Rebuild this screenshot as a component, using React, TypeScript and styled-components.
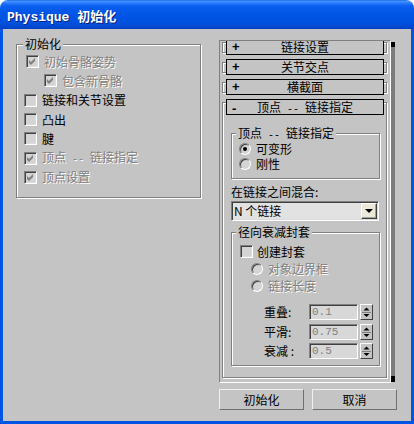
import React from 'react';
import styled, { createGlobalStyle } from 'styled-components';

const FACE = '#c4c4c4';
const CJK = `"Noto Sans CJK SC", "Noto Sans", sans-serif`;

const GlobalStyle = createGlobalStyle`
  html, body { margin: 0; padding: 0; background: #fff; }
  * { box-sizing: border-box; }
`;

const Window = styled.div`
  width: 414px;
  height: 424px;
  display: flex;
  flex-direction: column;
  border-radius: 8px 8px 0 0;
  overflow: hidden;
  font-family: ${CJK};
  font-size: 12px;
  color: #000;
`;

const TitleBar = styled.div`
  height: 29px;
  flex: none;
  display: flex;
  align-items: center;
  padding: 2px 0 0 7px;
  background: linear-gradient(
    180deg,
    #0a5ae8 0px,
    #4a98ff 1px,
    #2a7cff 3px,
    #0a5ff0 6px,
    #0055e5 14px,
    #0052e0 22px,
    #0048d0 27px,
    #003cb8 29px
  );
`;

const Title = styled.span`
  font-family: "Liberation Mono", "Noto Sans CJK SC", monospace;
  font-weight: bold;
  font-size: 13px;
  color: #fff;
  text-shadow: 1px 1px 0 #0a1d7a;
  white-space: pre;
`;

const Body = styled.div`
  flex: 1;
  display: flex;
  align-items: flex-start;
  gap: 18px;
  padding: 9px 0 0 13px;
  background: ${FACE};
  border: 3px solid #0054e3;
  border-top: none;
`;

const Group = styled.fieldset<{ $w: number; $pt: number; $pb: number; $ml?: number; $mt?: number }>`
  margin: ${p => p.$mt ?? 0}px 0 0 ${p => p.$ml ?? 0}px;
  width: ${p => p.$w}px;
  min-width: 0;
  padding: ${p => p.$pt}px 0 ${p => p.$pb}px 0;
  border: 1px solid #808080;
  box-shadow: inset 1px 1px 0 #fff, 1px 1px 0 #fff;
`;

const Legend = styled.legend<{ $ml: number }>`
  margin-left: ${p => p.$ml}px;
  padding: 0 2px;
  height: 12px;
  line-height: 12px;
  background: ${FACE};
  white-space: pre;
`;

const Half = styled.span`
  font-family: "Liberation Mono", monospace;
  font-size: 10px;
  white-space: pre;
`;

const Row = styled.div<{ $h: number; $pl: number; $gap: number; $dim?: boolean }>`
  height: ${p => p.$h}px;
  display: flex;
  align-items: center;
  gap: ${p => p.$gap}px;
  padding-left: ${p => p.$pl}px;
  line-height: 12px;
  white-space: pre;
  color: ${p => (p.$dim ? '#808080' : '#000')};
  text-shadow: ${p => (p.$dim ? '1px 1px 0 #fff' : 'none')};
`;

const Box = styled.span`
  width: 13px;
  height: 13px;
  flex: none;
  display: block;
  border: 1px solid;
  border-color: #808080 #fff #fff #808080;
  box-shadow: inset 1px 1px 0 #404040, inset -1px -1px 0 #dcdcdc;
  background: #d4d4d4;
  svg { display: block; }
`;

const RadioDot = styled.span<{ $on?: boolean }>`
  width: 12px;
  height: 12px;
  flex: none;
  border-radius: 50%;
  border: 1px solid;
  border-color: #808080 #fff #fff #808080;
  box-shadow: inset 1px 1px 0 #404040;
  background: #d4d4d4;
  display: flex;
  align-items: center;
  justify-content: center;
  &::after {
    content: '';
    display: ${p => (p.$on ? 'block' : 'none')};
    width: 4px;
    height: 4px;
    border-radius: 50%;
    background: #000;
  }
`;

const RightCol = styled.div`
  width: 178px;
  margin-top: 2px;
  display: flex;
  flex-direction: column;
`;

const PanelRow = styled.div`
  display: flex;
  height: 343px;
`;

const Scroll = styled.div`
  width: 172px;
  height: 343px;
  overflow: hidden;
  padding-left: 2px;
  border: 1px solid;
  border-color: #808080 #fff #fff #808080;
`;

const ScrollBar = styled.div`
  width: 4px;
  height: 340px;
  margin-top: 2px;
  background: linear-gradient(180deg, #000 0 5px, #7c7c7c 5px calc(100% - 6px), #000 calc(100% - 6px));
`;

const Rollouts = styled.div`
  padding-top: 1px;
`;

const Frame = styled.div<{ $open?: boolean }>`
  width: 165px;
  padding: 0 0 ${p => (p.$open ? 11 : 0)}px 3px;
  margin-bottom: 9px;
  border: 1px solid #808080;
  box-shadow: inset 1px 1px 0 #fff, 1px 1px 0 #fff;
`;

const RollHeader = styled.div<{ $open?: boolean }>`
  width: 158px;
  height: 16px;
  margin: -4px 0 ${p => (p.$open ? 0 : -3)}px;
  border: 1px solid #000;
  background: ${FACE};
  display: grid;
  grid-template-columns: 20px 1fr 20px;
  align-items: center;
  line-height: 14px;
  white-space: pre;
`;

const Sign = styled.span`
  padding-left: 5px;
  font-weight: bold;
  font-family: "Liberation Sans", sans-serif;
  font-size: 13px;
`;

const HeadText = styled.span`
  text-align: center;
`;

const Label = styled.div<{ $mt: number }>`
  margin: ${p => p.$mt}px 0 0 5px;
  height: 12px;
  line-height: 12px;
`;

const Select = styled.div`
  width: 148px;
  height: 20px;
  margin: 3px 0 0 5px;
  display: flex;
  align-items: center;
  padding: 0 1px 0 2px;
  border: 1px solid;
  border-color: #808080 #fff #fff #808080;
  box-shadow: inset 1px 1px 0 #404040, inset -1px -1px 0 #dcdcdc;
  background: #e2e2e2;
`;

const SelectText = styled.span`
  flex: 1;
  line-height: 12px;
  white-space: pre;
`;

const SelectBtn = styled.span`
  width: 16px;
  height: 16px;
  display: flex;
  align-items: center;
  justify-content: center;
  background: #ece9d8;
  border: 1px solid;
  border-color: #fff #404040 #404040 #fff;
  box-shadow: inset -1px -1px 0 #a0a0a0;
  &::after {
    content: '';
    border-left: 4px solid transparent;
    border-right: 4px solid transparent;
    border-top: 4px solid #000;
  }
`;

const SpinList = styled.div`
  margin-top: 10px;
  display: flex;
  flex-direction: column;
  gap: 3.5px;
`;

const SpinRow = styled.div`
  height: 16px;
  display: flex;
  align-items: center;
  padding-left: 32px;
`;

const SpinLabel = styled.span`
  width: 45px;
  line-height: 12px;
  white-space: pre;
`;

const SpinField = styled.span`
  width: 49px;
  height: 16px;
  display: flex;
  align-items: center;
  padding-left: 2px;
  border: 1px solid;
  border-color: #808080 #fff #fff #808080;
  box-shadow: inset 1px 1px 0 #404040;
  background: #d8d8d8;
  color: #808080;
  font-family: "Liberation Mono", monospace;
  font-size: 11px;
`;

const SpinBtn = styled.span`
  width: 13px;
  height: 16px;
  margin-left: 2px;
  border: 1px solid;
  border-color: #fff #404040 #404040 #fff;
  background: ${FACE};
  svg { display: block; }
`;

const Buttons = styled.div`
  display: flex;
  gap: 8px;
  margin-top: 6px;
`;

const Btn = styled.button`
  width: 85px;
  height: 21px;
  padding: 0;
  background: ${FACE};
  border: 1px solid;
  border-color: #f0f0f0 #707070 #707070 #f0f0f0;
  font-family: ${CJK};
  font-size: 12px;
  line-height: 12px;
  color: #000;
`;

const CheckMark = ({ color }: { color: string }) => (
  <svg width="11" height="11" viewBox="0 0 11 11">
    <polygon points="2,4 4,6 8,2 8,5 4,9 2,7" fill={color} />
  </svg>
);

const Check = ({ label, checked, dim, pl, gap = 5, h }: { label: React.ReactNode; checked?: boolean; dim?: boolean; pl: number; gap?: number; h: number }) => (
  <Row $h={h} $pl={pl} $gap={gap} $dim={dim}>
    <Box>{checked && <CheckMark color={dim ? '#808080' : '#000'} />}</Box>
    <span>{label}</span>
  </Row>
);

const Radio = ({ label, on, dim, pl, h }: { label: string; on?: boolean; dim?: boolean; pl: number; h: number }) => (
  <Row $h={h} $pl={pl} $gap={5} $dim={dim}>
    <RadioDot $on={on} />
    <span>{label}</span>
  </Row>
);

const SpinArrows = () => (
  <svg width="11" height="14" viewBox="0 0 11 14">
    <path d="M5.5 2.5 L8.5 5.5 L2.5 5.5 Z" fill="#000" />
    <path d="M1 7.5 H10" stroke="#808080" />
    <path d="M2.5 9 L8.5 9 L5.5 12 Z" fill="#000" />
  </svg>
);

const Spinner = ({ label, value }: { label: React.ReactNode; value: string }) => (
  <SpinRow>
    <SpinLabel>{label}</SpinLabel>
    <SpinField>{value}</SpinField>
    <SpinBtn>
      <SpinArrows />
    </SpinBtn>
  </SpinRow>
);

const Rollout = ({ title, open, children }: { title: React.ReactNode; open?: boolean; children?: React.ReactNode }) => (
  <Frame $open={open}>
    <RollHeader $open={open}>
      <Sign>{open ? '-' : '+'}</Sign>
      <HeadText>{title}</HeadText>
      <span />
    </RollHeader>
    {children}
  </Frame>
);

const LEFT_ROW = 19.3;

export default function App() {
  return (
    <>
      <GlobalStyle />
      <Window>
        <TitleBar>
          <Title>Physique 初始化</Title>
        </TitleBar>
        <Body>
          <Group $w={185} $pt={2} $pb={10}>
            <Legend $ml={6}>初始化</Legend>
            <Check h={LEFT_ROW} pl={9} label="初始骨骼姿势" checked dim />
            <Check h={LEFT_ROW} pl={27} label="包含新骨骼" checked dim />
            <Check h={LEFT_ROW} pl={7} label="链接和关节设置" />
            <Check h={LEFT_ROW} pl={7} label="凸出" />
            <Check h={LEFT_ROW} pl={7} label="腱" />
            <Check h={LEFT_ROW} pl={7} label={<>顶点<Half> -- </Half>链接指定</>} checked dim />
            <Check h={LEFT_ROW} pl={7} label="顶点设置" checked dim />
          </Group>

          <RightCol>
            <PanelRow>
              <Scroll>
                <Rollouts>
                  <Rollout title="链接设置" />
                  <Rollout title="关节交点" />
                  <Rollout title="横截面" />
                  <Rollout open title={<>顶点<Half> -- </Half>链接指定</>}>
                    <Group $w={149} $pt={2} $pb={7} $ml={5} $mt={12}>
                      <Legend $ml={4}>顶点<Half> -- </Half>链接指定</Legend>
                      <Radio h={15} pl={7} label="可变形" on />
                      <Radio h={15} pl={7} label="刚性" />
                    </Group>
                    <Label $mt={7}>在链接之间混合:</Label>
                    <Select>
                      <SelectText>N 个链接</SelectText>
                      <SelectBtn />
                    </Select>
                    <Group $w={149} $pt={5} $pb={6} $ml={5} $mt={5}>
                      <Legend $ml={4}>径向衰减封套</Legend>
                      <Check h={17} pl={8} gap={4} label="创建封套" />
                      <Radio h={17} pl={19} label="对象边界框" dim />
                      <Radio h={17} pl={19} label="链接长度" dim />
                      <SpinList>
                        <Spinner label="重叠:" value="0.1" />
                        <Spinner label="平滑:" value="0.75" />
                        <Spinner label="衰减 :" value="0.5" />
                      </SpinList>
                    </Group>
                  </Rollout>
                </Rollouts>
              </Scroll>
              <ScrollBar />
            </PanelRow>
            <Buttons>
              <Btn>初始化</Btn>
              <Btn>取消</Btn>
            </Buttons>
          </RightCol>
        </Body>
      </Window>
    </>
  );
}
